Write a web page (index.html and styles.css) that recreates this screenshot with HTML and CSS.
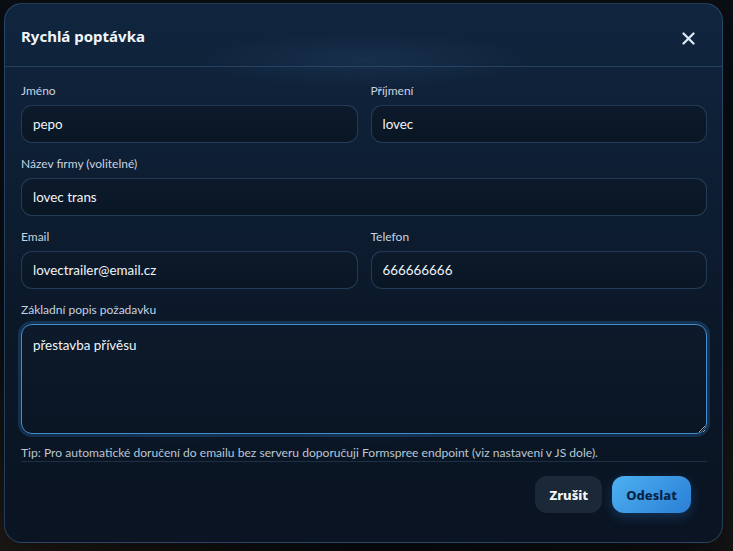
FILE: index.html
```html
<!DOCTYPE html>
<html lang="cs">
<head>
  <meta charset="UTF-8" />
  <title>Rychlá poptávka</title>
  <meta name="viewport" content="width=device-width, initial-scale=1.0">
  <link rel="stylesheet" href="styles.css">
</head>
<body>

  <div class="backdrop">
    <div class="modal">
      <div class="modal-head">
        <h2>Rychlá poptávka</h2>
        <button class="close" aria-label="Zavřít">
          <svg width="13" height="13" viewBox="0 0 13 13">
            <path d="M1.5 1.5 L11.5 11.5 M11.5 1.5 L1.5 11.5" stroke="#dce8f4" stroke-width="2.3" stroke-linecap="round" />
          </svg>
        </button>
      </div>

      <form class="modal-body">
        <div class="grid">
          <div class="field">
            <label>Jméno</label>
            <input type="text" value="pepo">
          </div>
          <div class="field">
            <label>Příjmení</label>
            <input type="text" value="lovec">
          </div>
          <div class="field wide">
            <label>Název firmy (volitelné)</label>
            <input type="text" value="lovec trans">
          </div>
          <div class="field">
            <label>Email</label>
            <input type="email" value="lovectrailer@email.cz">
          </div>
          <div class="field">
            <label>Telefon</label>
            <input type="tel" value="666666666">
          </div>
          <div class="field wide">
            <label>Základní popis požadavku</label>
            <textarea id="popis" class="focused">přestavba přívěsu</textarea>
          </div>
        </div>

        <p class="tip">Tip: Pro automatické doručení do emailu bez serveru doporučuji Formspree endpoint (viz nastavení v JS dole).</p>

        <div class="actions">
          <button type="button" class="btn ghost">Zrušit</button>
          <button type="button" class="btn primary">Odeslat</button>
        </div>
      </form>
    </div>
  </div>

  <script>
    const popis = document.getElementById("popis");
    popis.focus();
    popis.setSelectionRange(popis.value.length, popis.value.length);
  </script>

</body>
</html>
```

FILE: styles.css
```css
* { box-sizing: border-box; }

body {
  margin: 0;
  width: 733px;
  height: 551px;
  overflow: hidden;
  font-family: Lato, "Noto Sans", sans-serif;
  background: #0a0f15;
  background-image:
    radial-gradient(ellipse at 8% 100%, rgba(70, 50, 30, 0.45), transparent 30%),
    radial-gradient(ellipse at 100% 90%, rgba(50, 40, 30, 0.4), transparent 30%);
}

.backdrop {
  padding: 3px 10px 8px 4px;
  height: 100%;
}

.modal {
  height: 540px;
  border: 1px solid rgba(110, 160, 210, 0.28);
  border-radius: 18px;
  background:
    radial-gradient(ellipse 170px 28px at 360px 56px, rgba(40, 70, 105, 0.35), transparent),
    radial-gradient(ellipse 90px 30px at 175px 410px, rgba(30, 55, 85, 0.35), transparent),
    radial-gradient(ellipse 90px 30px at 365px 410px, rgba(30, 55, 85, 0.35), transparent),
    linear-gradient(180deg, #10253f 0%, #0e2036 25%, #0b1828 60%, #0a1422 100%);
  box-shadow: 0 20px 50px rgba(0, 0, 0, 0.6);
  overflow: hidden;
}

.modal-head {
  height: 63px;
  display: flex;
  align-items: center;
  justify-content: space-between;
  padding: 1px 27px 0 16px;
  border-bottom: 1px solid rgba(90, 140, 190, 0.28);
}

.modal-head h2 {
  margin: 0;
  font-family: "Noto Sans", sans-serif;
  font-size: 15px;
  font-weight: 700;
  color: #f1f5fa;
}

.close {
  background: none;
  border: none;
  padding: 0;
  margin-top: 5px;
  width: 13px;
  height: 13px;
  cursor: pointer;
}

.modal-body {
  padding: 16px 15px 0 16px;
}

.grid {
  display: grid;
  grid-template-columns: 1fr 1fr;
  column-gap: 13px;
  row-gap: 13px;
}

.field.wide { grid-column: 1 / -1; }

.field label {
  display: block;
  font-size: 12px;
  line-height: 16px;
  color: #c6d3e1;
  margin-bottom: 6px;
}

.field input,
.field textarea {
  display: block;
  width: 100%;
  height: 38px;
  padding: 0 11px;
  font-family: inherit;
  font-size: 13.4px;
  color: #f0f4f9;
  caret-color: #f0f4f9;
  background: linear-gradient(180deg, #0c1a2b, #0a1624);
  border: 1px solid rgba(90, 140, 190, 0.3);
  border-radius: 11px;
  outline: none;
}

.field textarea {
  height: 110px;
  padding: 10px 11px;
  line-height: 20px;
  resize: vertical;
}

.field textarea.focused {
  border-color: #3f8fd0;
  box-shadow: 0 0 0 3px rgba(50, 120, 190, 0.28);
}

.tip {
  margin: 11px 0 0;
  font-size: 12.1px;
  line-height: 16px;
  color: #b9c6d4;
  border-bottom: 1px solid rgba(90, 140, 190, 0.22);
}

.actions {
  display: flex;
  justify-content: flex-end;
  gap: 10px;
  padding: 14px 16px 0 0;
}

.btn {
  height: 37px;
  padding: 0 14px;
  border: none;
  border-radius: 12px;
  font-family: "Noto Sans", sans-serif;
  font-size: 13px;
  font-weight: 800;
  cursor: pointer;
}

.btn.ghost {
  background: #1b2837;
  color: #f5f8fb;
}

.btn.primary {
  background: linear-gradient(135deg, #4db0f0, #2a7fd6);
  color: #0b2444;
  box-shadow: 0 4px 12px rgba(40, 120, 210, 0.3);
}
```
